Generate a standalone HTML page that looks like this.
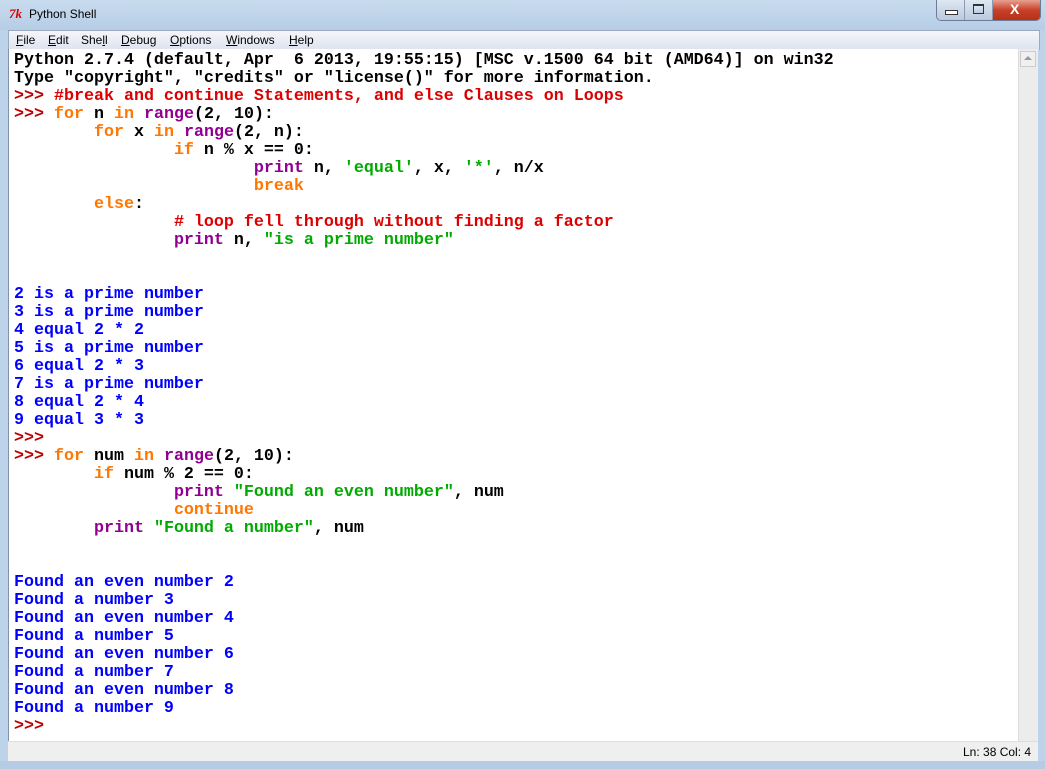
<!DOCTYPE html>
<html><head><meta charset="utf-8"><style>
body{margin:0;width:1045px;height:769px;overflow:hidden;background:#bcd3ea;font-family:"Liberation Sans",sans-serif;position:relative}
.title{position:absolute;left:0;top:0;width:1045px;height:30px;background:linear-gradient(#c9dcef,#b6cde6)}
.title span{position:absolute;left:29px;top:7px;font-size:12px;color:#000}
.tk{position:absolute;left:9px;top:6px;color:#d00;font-style:italic;font-weight:bold;font-size:13px;font-family:"Liberation Serif",serif}
.btns{position:absolute;left:936px;top:0;height:20px;display:flex;border:1px solid #6b7d95;border-top:none;border-radius:0 0 5px 5px;overflow:hidden}
.btns div{height:20px;background:linear-gradient(#dfe8f3,#b9c9dd);border-right:1px solid #8a9bb3;position:relative}
.menu{position:absolute;left:8px;top:30px;width:1030px;height:19px;background:linear-gradient(#f4f6fa,#dde3ee);border:1px solid #9aa9bd;border-bottom:none;font-size:12px}
.menu span{position:absolute;top:2px}
.txt{position:absolute;left:8px;top:49px;width:1010px;height:692px;background:#fff;border-left:1px solid #8193aa}
pre{margin:0;position:absolute;left:5px;top:3px;font-family:"Liberation Mono",monospace;font-weight:bold;font-size:16.67px;line-height:18px;color:#000}
.p{color:#c00000}.c{color:#dd0000}.k{color:#ff7700}.b{color:#900090}.s{color:#00aa00}.o{color:#0000ff}
.sb{position:absolute;left:1018px;top:49px;width:19px;height:692px;background:#ececec;border-left:1px solid #ddd}
.status{position:absolute;left:8px;top:741px;width:1030px;height:20px;background:#efefef;border-top:1px solid #ddd}
.bottom{position:absolute;left:0;top:761px;width:1045px;height:8px;background:#b6cce5}
</style></head><body>
<div class="title"><div class="tk">7k</div><span>Python Shell</span></div>
<div class="btns"><div style="width:27px"><div style="position:absolute;left:8px;top:10px;width:11px;height:3px;border:1px solid #333;background:#fff"></div></div><div style="width:27px"><div style="position:absolute;left:8px;top:4px;width:9px;height:7px;border:1px solid #333;border-top-width:2px"></div></div><div style="width:47px;border:none;background:linear-gradient(#e8a190,#c8412a 50%,#b73016)"><span style="position:absolute;left:17px;top:1px;color:#fff;font-weight:bold;font-size:14px">X</span></div></div>
<div class="menu"><span style="left:7px"><u>F</u>ile</span><span style="left:39px"><u>E</u>dit</span><span style="left:72px">She<u>l</u>l</span><span style="left:112px"><u>D</u>ebug</span><span style="left:161px"><u>O</u>ptions</span><span style="left:217px"><u>W</u>indows</span><span style="left:280px"><u>H</u>elp</span></div>
<div class="txt"><pre>Python 2.7.4 (default, Apr  6 2013, 19:55:15) [MSC v.1500 64 bit (AMD64)] on win32
Type "copyright", "credits" or "license()" for more information.
<span class="p">&gt;&gt;&gt; </span><span class="c">#break and continue Statements, and else Clauses on Loops</span>
<span class="p">&gt;&gt;&gt; </span><span class="k">for</span> n <span class="k">in</span> <span class="b">range</span>(2, 10):
        <span class="k">for</span> x <span class="k">in</span> <span class="b">range</span>(2, n):
                <span class="k">if</span> n % x == 0:
                        <span class="b">print</span> n, <span class="s">'equal'</span>, x, <span class="s">'*'</span>, n/x
                        <span class="k">break</span>
        <span class="k">else</span>:
                <span class="c"># loop fell through without finding a factor</span>
                <span class="b">print</span> n, <span class="s">"is a prime number"</span>


<span class="o">2 is a prime number
3 is a prime number
4 equal 2 * 2
5 is a prime number
6 equal 2 * 3
7 is a prime number
8 equal 2 * 4
9 equal 3 * 3</span>
<span class="p">&gt;&gt;&gt;</span>
<span class="p">&gt;&gt;&gt; </span><span class="k">for</span> num <span class="k">in</span> <span class="b">range</span>(2, 10):
        <span class="k">if</span> num % 2 == 0:
                <span class="b">print</span> <span class="s">"Found an even number"</span>, num
                <span class="k">continue</span>
        <span class="b">print</span> <span class="s">"Found a number"</span>, num


<span class="o">Found an even number 2
Found a number 3
Found an even number 4
Found a number 5
Found an even number 6
Found a number 7
Found an even number 8
Found a number 9</span>
<span class="p">&gt;&gt;&gt;</span></pre></div>
<div class="sb"><div style="position:absolute;left:1px;top:2px;width:16px;height:16px;background:#f0f0f0;border:1px solid #ccc;box-sizing:border-box"><div style="position:absolute;left:3px;top:4px;border:4px solid transparent;border-bottom:4px solid #999;border-top:none;width:0"></div></div></div>
<div class="status"><span style="position:absolute;left:955px;top:3px;font-size:12px">Ln: 38 Col: 4</span></div>
<div class="bottom"></div>
</body></html>
